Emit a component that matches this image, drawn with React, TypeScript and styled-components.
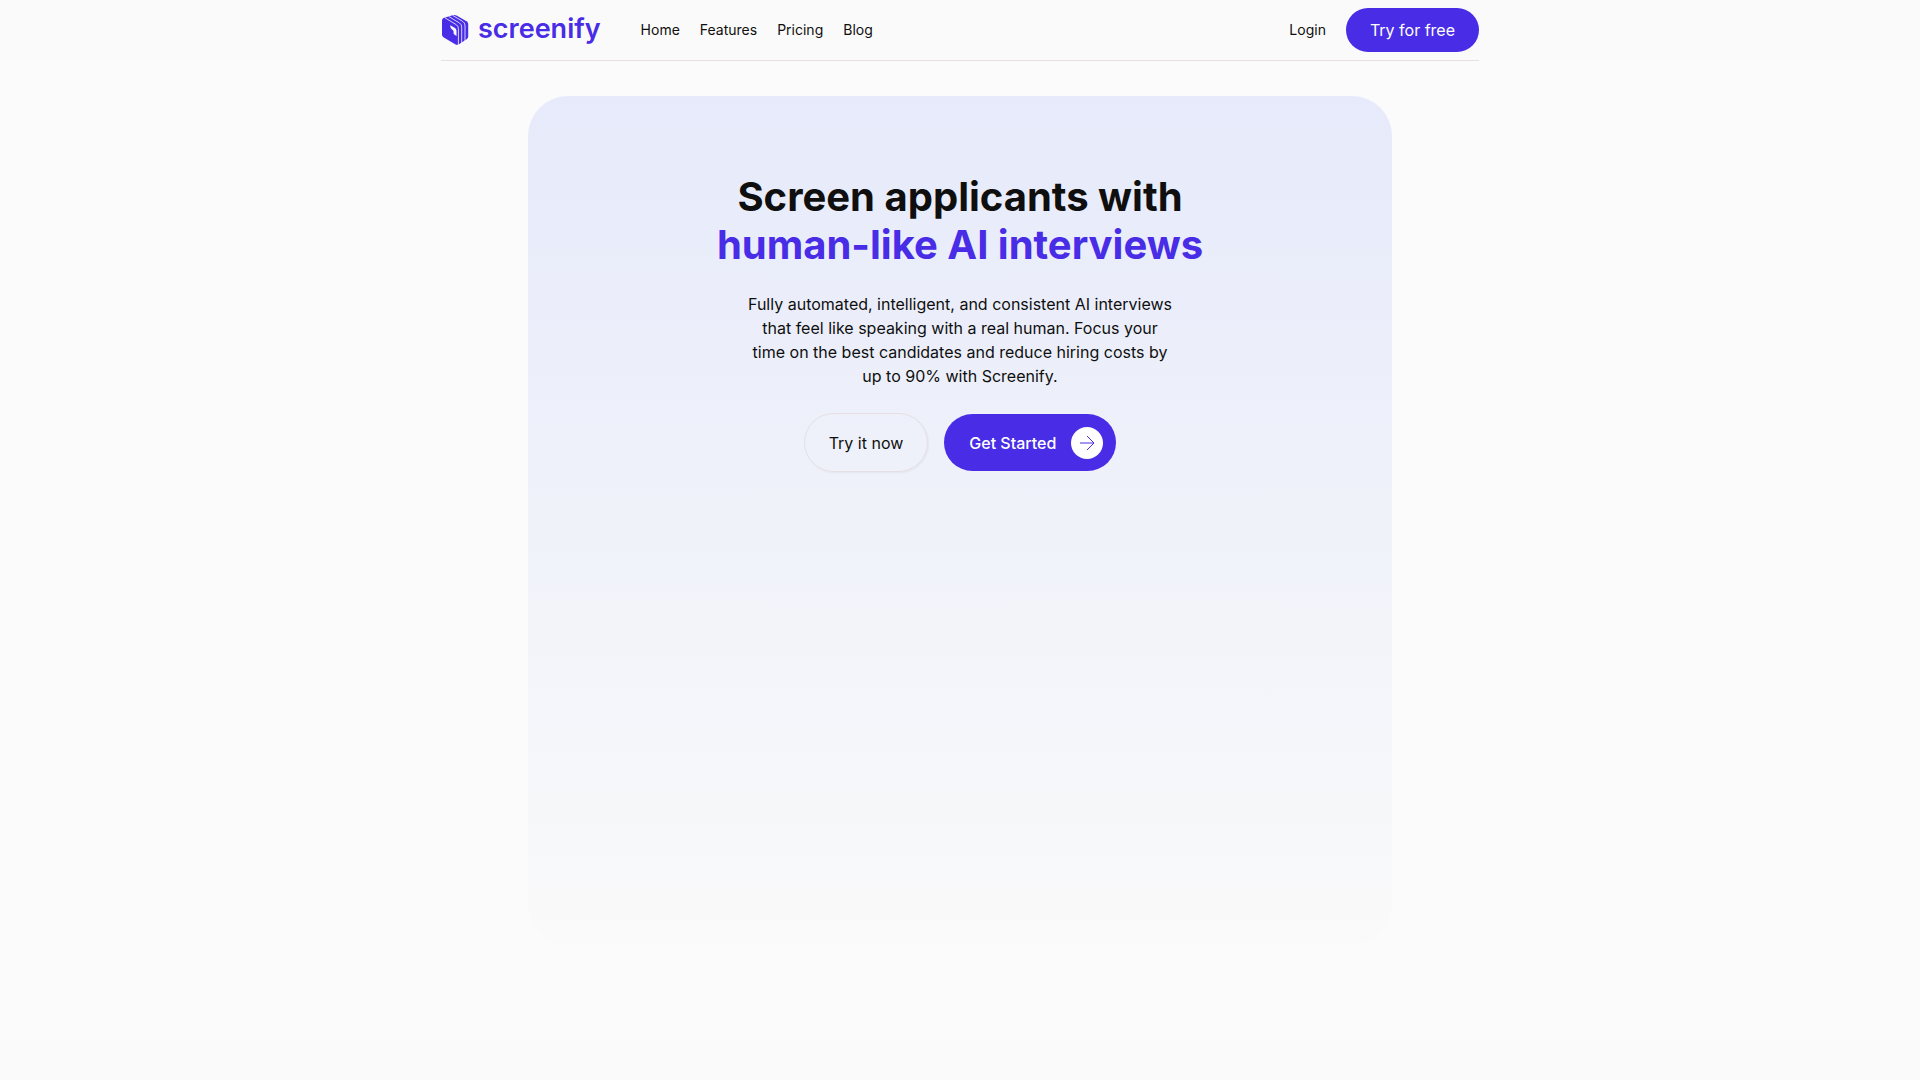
import React from 'react';
import styled, { createGlobalStyle } from 'styled-components';

const BRAND = '#482ce6';

const GlobalStyle = createGlobalStyle`
  *, *::before, *::after { box-sizing: border-box; }
  body {
    margin: 0;
    background: #fafafa;
    color: #0f0f0f;
    font-family: Inter, "Liberation Sans", sans-serif;
    font-size: 16px;
    line-height: 24px;
  }
  h1, p { margin: 0; }
`;

const Container = styled.div`
  max-width: 1038px;
  margin: 0 auto;
`;

const Bar = styled(Container)`
  display: flex;
  align-items: center;
  justify-content: space-between;
  padding: 8px 0;
  border-bottom: 1px solid #e9dfe1;
`;

const Group = styled.div`
  display: flex;
  align-items: center;
  gap: 40px;
`;

const Logo = styled.a`
  display: flex;
  align-items: flex-start;
  gap: 9px;
  color: ${BRAND};
  font-size: 27px;
  line-height: 30px;
  font-weight: 600;
  text-decoration: none;
`;

const Nav = styled.nav`
  display: flex;
  align-items: center;
  gap: 20px;
`;

const NavLink = styled.a`
  color: #0f0f0f;
  font-size: 14px;
  line-height: 20px;
  text-decoration: none;
`;

const Button = styled.button<{ $outline?: boolean; $large?: boolean }>`
  display: flex;
  align-items: center;
  gap: 15px;
  border: ${p => (p.$outline ? '1px solid #e6dee4' : '0')};
  border-radius: ${p => (p.$large || p.$outline ? '32px' : '24px')};
  padding: ${p => (p.$outline ? '16px 24px' : p.$large ? '12px 13px 12px 25px' : '10px 24px')};
  min-height: ${p => (p.$outline ? '59px' : p.$large ? '57px' : '44px')};
  background: ${p => (p.$outline ? 'transparent' : BRAND)};
  color: ${p => (p.$outline ? '#0f0f0f' : '#fff')};
  box-shadow: ${p => (p.$outline ? '1px 1px 2px rgba(0, 0, 0, 0.05)' : 'none')};
  font: inherit;
  font-weight: ${p => (p.$large ? 500 : 400)};
  cursor: pointer;
`;

const Main = styled.main`
  padding: 35px 0 96px;
  background: #fbfbfb;
`;

const Hero = styled.section`
  display: flex;
  flex-direction: column;
  align-items: center;
  max-width: 864px;
  min-height: 849px;
  margin: 0 auto;
  padding: 77px 24px;
  border-radius: 40px;
  background: linear-gradient(180deg, #e6eafa, #fafafa);
  text-align: center;
`;

const Title = styled.h1`
  font-size: 40px;
  line-height: 48px;
  font-weight: 700;
`;

const Accent = styled.span`
  display: block;
  color: ${BRAND};
`;

const Lead = styled.p`
  max-width: 432px;
  margin-top: 23px;
`;

const Actions = styled.div`
  display: flex;
  align-items: center;
  gap: 16px;
  margin-top: 25px;
`;

const ArrowBadge = styled.span`
  display: grid;
  place-items: center;
  width: 32px;
  height: 32px;
  border-radius: 50%;
  background: #fff;
  color: ${BRAND};
`;

const LogoMark = () => (
  <svg width="28" height="32" viewBox="0 0 28 32" aria-hidden="true">
    <path
      fill="currentColor"
      d="M1 6.500Q1 4.800 2.500 4L11.500 1.200Q14 .6 16 1.700L25.500 7.200Q27.200 8.200 27.200 10V22.500Q27.200 24 26 24.900L18 30.300Q16.300 31.300 14.600 30.400L2.400 23.200Q1 22.300 1 20.800Z"
    />
    <g fill="none" stroke="#fafafa" strokeWidth="0.8">
      <path d="M4 3.800 15.300 10.700Q17.400 12 17.400 14.500V31" />
      <path d="M7.800 2.500 18.500 9Q20.700 10.400 20.700 13V29" />
      <path d="M11.600 1.300 21.700 7.400Q24 8.900 24 11.500V27" />
    </g>
    <path fill="#fafafa" d="M9.300 11.300 14 14Q15.500 15 15.500 16.800V22L13.300 20.500Q12.600 20 12.600 19V17.600Q12.600 16.400 11.300 15.700 9.300 14.500 9.300 12.500Z" />
  </svg>
);

const Arrow = () => (
  <svg width="16" height="16" viewBox="0 0 16 16" fill="none" stroke="currentColor" aria-hidden="true">
    <path d="M1 8h14M8 1l7 7-7 7" />
  </svg>
);

const links = ['Home', 'Features', 'Pricing', 'Blog'];

export default function App() {
  return (
    <>
      <GlobalStyle />
      <header>
        <Bar>
          <Group>
            <Logo href="#home"><LogoMark />screenify</Logo>
            <Nav aria-label="Main">
              {links.map(label => (
                <NavLink key={label} href={`#${label.toLowerCase()}`}>{label}</NavLink>
              ))}
            </Nav>
          </Group>
          <Nav aria-label="Account">
            <NavLink href="#login">Login</NavLink>
            <Button type="button">Try for free</Button>
          </Nav>
        </Bar>
      </header>
      <Main>
        <Hero>
          <Title>Screen applicants with <Accent>human-like AI interviews</Accent></Title>
          <Lead>
            Fully automated, intelligent, and consistent AI interviews that feel like
            speaking with a real human. Focus your time on the best candidates and reduce
            hiring costs by up to 90% with Screenify.
          </Lead>
          <Actions>
            <Button type="button" $outline>Try it now</Button>
            <Button type="button" $large>Get Started<ArrowBadge><Arrow /></ArrowBadge></Button>
          </Actions>
        </Hero>
      </Main>
    </>
  );
}
